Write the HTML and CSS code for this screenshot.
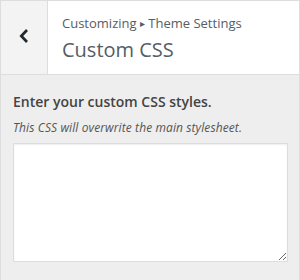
FILE: index.html
```html
<!DOCTYPE html>
<html lang="en">
<head>
<meta charset="UTF-8" />
<title>Custom CSS</title>
<link rel="stylesheet" href="styles.css">
</head>
<body>

<div class="panel">
  <div class="panel-head">
    <button class="back" aria-label="Back">
      <svg width="10" height="16" viewBox="0 0 10 16">
        <polyline points="8,2 2.3,8 8,14" fill="none" stroke="#23282d" stroke-width="2.7" />
      </svg>
    </button>
    <div class="titles">
      <div class="crumb">Customizing <span class="sep">&#9656;</span> Theme Settings</div>
      <h1>Custom CSS</h1>
    </div>
  </div>

  <div class="control">
    <label class="control-title" for="css-box">Enter your custom CSS styles.</label>
    <p class="control-desc">This CSS will overwrite the main stylesheet.</p>
    <textarea id="css-box"></textarea>
  </div>
</div>

</body>
</html>
```

FILE: styles.css
```css
/* Reset */
*, *::before, *::after {
  box-sizing: border-box;
  margin: 0; padding: 0;
}
html, body {
  height: 100%;
  font-family: 'Open Sans', 'Noto Sans', sans-serif;
  color: #555d66;
  background: #eee;
}
.panel {
  height: 280px;
  border: 1px solid #ddd;
  border-bottom: none;
  background: #eee;
}
.panel-head {
  display: flex;
  height: 74px;
  background: #fff;
  border-bottom: 1px solid #ddd;
}
.back {
  width: 47px;
  flex-shrink: 0;
  display: flex;
  align-items: center;
  justify-content: center;
  padding-bottom: 3px;
  background: #f3f3f3;
  border: none;
  border-right: 1px solid #ddd;
}
.titles {
  padding: 12px 0 0 14px;
}
.crumb {
  font-size: 13px;
  line-height: 20px;
}
.crumb .sep {
  font-size: 10px;
  position: relative;
  top: -1px;
}
h1 {
  font-size: 20px;
  font-weight: 400;
  line-height: 28px;
  margin-top: 2px;
}
.control {
  padding: 15px 12px 0 12px;
}
.control-title {
  display: block;
  font-size: 14px;
  font-weight: 600;
  line-height: 24px;
  color: #444;
}
.control-desc {
  font-size: 12px;
  font-style: italic;
  line-height: 18px;
  letter-spacing: 0.1px;
  margin-top: 5px;
  color: #555;
}
textarea {
  display: block;
  width: 275px;
  height: 119px;
  margin-top: 6px;
  border: 1px solid #ddd;
  background: #fff;
  box-shadow: inset 0 1px 2px rgba(0, 0, 0, 0.07);
}
```
